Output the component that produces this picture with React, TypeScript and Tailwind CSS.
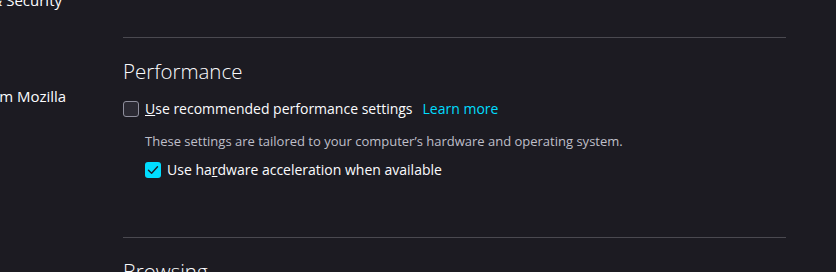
import React from "react";

const font = { fontFamily: '"Open Sans", "Noto Sans", sans-serif' };

function Checkbox({ checked }: { checked?: boolean }) {
  if (checked) {
    return (
      <span className="flex h-4 w-4 shrink-0 items-center justify-center rounded-[3px] bg-[#00ddff]">
        <svg width="12" height="12" viewBox="0 0 12 12" fill="none">
          <path d="M1.5 6.2 L4.6 9.2 L10.5 2.8" stroke="#1c1b22" strokeWidth="1.4" strokeLinecap="round" strokeLinejoin="round" />
        </svg>
      </span>
    );
  }
  return <span className="h-4 w-4 shrink-0 rounded-[3px] border border-[#8f8f9d] bg-[#2b2a33]" />;
}

export default function App() {
  return (
    <div className="flex h-[272px] w-[836px] overflow-hidden bg-[#1c1b22] text-[#fbfbfe]" style={font}>
      <nav className="w-[123px] shrink-0 overflow-hidden">
        <ul className="-ml-[62px] -mt-[11px] flex w-[200px] flex-col gap-[74px] text-[15px] leading-[22px]">
          <li className="whitespace-nowrap">Privacy &amp; Security</li>
          <li className="whitespace-nowrap">More from Mozilla</li>
        </ul>
      </nav>

      <main className="flex w-[663px] flex-col pt-[37px]">
        <section className="border-t border-[#4a4950] pt-[18px] pb-[57px]">
          <h2 className="text-[20.5px] font-light leading-[30px]">Performance</h2>
          <div className="mt-[13px] flex items-center text-[14px] leading-[20px]">
            <Checkbox />
            <span className="ml-[6px]">
              <u>U</u>se recommended performance settings
            </span>
            <a className="ml-[10px] text-[#00ddff]">Learn more</a>
          </div>
          <p className="ml-[22px] mt-[13px] text-[13px] leading-[18px] text-[#bfbfc9]">
            These settings are tailored to your computer’s hardware and operating system.
          </p>
          <div className="ml-[22px] mt-[10px] flex items-center gap-[6px] text-[14px] leading-[20px]">
            <Checkbox checked />
            <span>
              Use ha<u>r</u>dware acceleration when available
            </span>
          </div>
        </section>
        <section className="border-t border-[#4a4950] pt-[18px]">
          <h2 className="text-[20.5px] font-light leading-[30px]">Browsing</h2>
        </section>
      </main>
    </div>
  );
}
